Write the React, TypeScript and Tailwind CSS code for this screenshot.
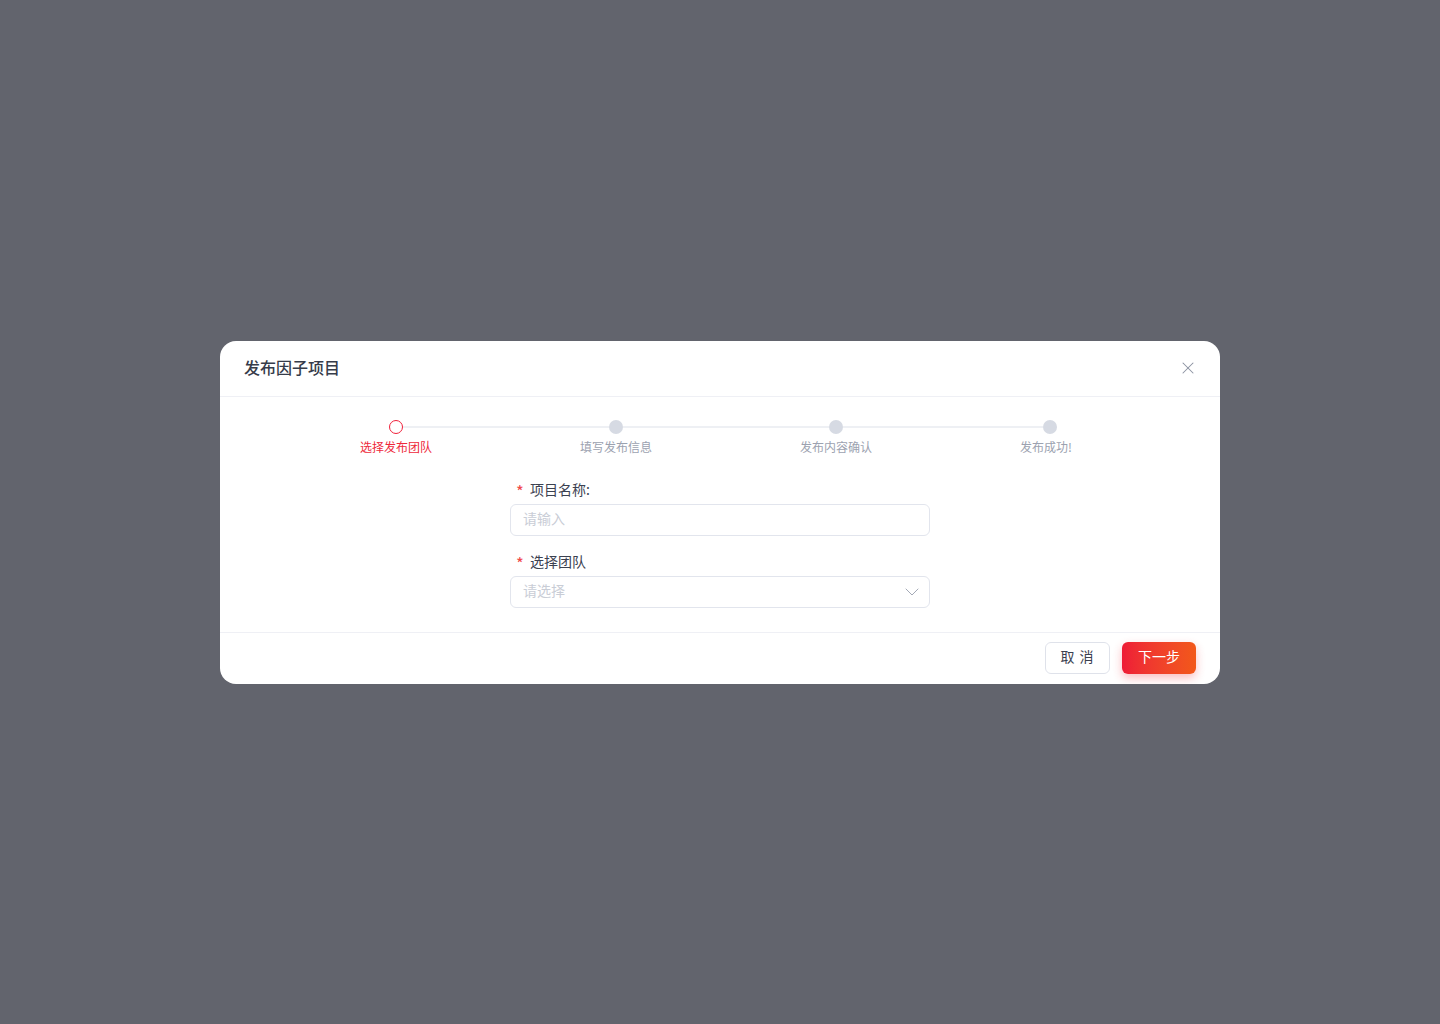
import { X, ChevronDown } from "lucide-react"

const steps = [
  { label: "选择发布团队", w: "w-[220px]" },
  { label: "填写发布信息", w: "w-[220px]" },
  { label: "发布内容确认", w: "w-[220px]" },
  { label: "发布成功!", w: "w-[208px]" },
]

const StepBar = ({ current }: { current: number }) => (
  <div className="flex pl-[66px]">
    {steps.map((step, i) => (
      <div key={step.label} className={`${step.w} flex flex-col items-center`}>
        <div className="relative flex h-[14px] w-full items-center justify-center">
          {i > 0 && (
            <span className="absolute left-0 top-[6px] h-[2px] w-[calc(50%-7px)] bg-[#eef0f4]" />
          )}
          {i < steps.length - 1 && (
            <span className="absolute right-0 top-[6px] h-[2px] w-[calc(50%-7px)] bg-[#eef0f4]" />
          )}
          {i === current ? (
            <span className="size-[14px] rounded-full border border-[#f0213b] bg-white" />
          ) : (
            <span className="size-[14px] rounded-full bg-[#d6dae3]" />
          )}
        </div>
        <span
          className={`mt-[5px] text-xs leading-4 ${
            i === current ? "text-[#ee2a3c]" : "text-[#9ca2b0]"
          } ${i === steps.length - 1 ? "mr-2" : ""}`}
        >
          {step.label}
        </span>
      </div>
    ))}
  </div>
)

const FieldLabel = ({ children }: { children: React.ReactNode }) => (
  <div className="flex h-[22px] items-center pl-[3px] text-sm text-[#3b4150]">
    <span className="mr-[3px] mt-[5px] w-[14px] text-center text-[15px] font-medium text-[#f04a4a]">*</span>
    {children}
  </div>
)

export default function App() {
  return (
    <div
      className="flex min-h-screen items-center justify-center bg-[#62646d]"
      style={{ fontFamily: '"Noto Sans CJK SC", "Noto Sans", sans-serif' }}
    >
      <div className="w-[1000px] overflow-hidden rounded-2xl bg-white">
        {/* header */}
        <div className="flex h-[56px] items-center justify-between border-b border-[#eff0f5] pl-6 pr-[22px] pb-[3px]">
          <h2 className="text-base font-medium text-[#363c4a]">发布因子项目</h2>
          <button aria-label="关闭" className="mt-[2px] text-[#8b92a1]">
            <X className="size-5" strokeWidth={1.25} />
          </button>
        </div>

        {/* body */}
        <div className="pb-6 pt-[23px]">
          <StepBar current={0} />

          <div className="mx-auto mt-[23px] flex w-[420px] flex-col">
            <FieldLabel>项目名称:</FieldLabel>
            <input
              placeholder="请输入"
              className="mt-1 h-8 w-full rounded-md border border-[#e2e5ed] px-3 pb-[3px] text-sm text-[#3b4150] outline-none placeholder:text-[#c9cdd6]"
            />

            <div className="mt-[14px]">
              <FieldLabel>选择团队</FieldLabel>
            </div>
            <div className="mt-1 flex h-8 w-full items-center justify-between rounded-md border border-[#e2e5ed] pl-3 pr-[5px]">
              <span className="pb-[3px] text-sm text-[#c9cdd6]">请选择</span>
              <ChevronDown className="size-6 text-[#a3a9b6]" strokeWidth={1} />
            </div>
          </div>
        </div>

        {/* footer */}
        <div className="flex items-center justify-end gap-3 border-t border-[#eff0f5] px-6 pb-[10px] pt-[9px]">
          <button className="h-8 w-[65px] rounded-md border border-[#dfe2ea] bg-white pb-[3px] text-sm tracking-[1px] text-[#3b4150]">
            取 消
          </button>
          <button className="h-8 w-[74px] rounded-md bg-gradient-to-r from-[#ee1b36] to-[#f25819] pb-[3px] text-sm text-white shadow-[0_4px_10px_rgba(240,40,50,0.3)]">
            下一步
          </button>
        </div>
      </div>
    </div>
  )
}
